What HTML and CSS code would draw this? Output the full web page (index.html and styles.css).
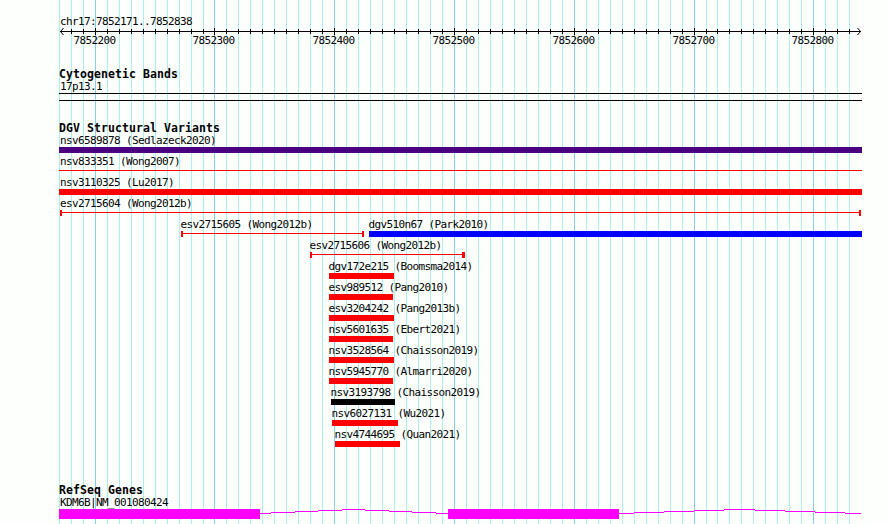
FILE: index.html
```
<!DOCTYPE html>
<html lang="en">
<head>
    <meta charset="UTF-8">
    <title>chr17:7852171..7852838</title>
    <link rel="stylesheet" href="styles.css">
</head>
<body>

<main class="browser">

    <header class="ruler">
        <p class="label">chr17:7852171..7852838</p>
        <svg class="axis" width="803" height="19" viewBox="59 28 803 19">
            <path d="M60 31.5H861"/>
            <!-- minor ticks -->
            <path class="minor" d="M71 31.5H204M226 31.5H707M717 31.5H850"/>
            <!-- major ticks -->
            <path d="M95.5 28v7M214.5 28v7M334.5 28v7M454.5 28v7M574.5 28v7M694.5 28v7M813.5 28v7"/>
            <!-- arrow heads -->
            <path d="M63.5 28L60.5 31.5L63.5 35M857.5 28L860.5 31.5L857.5 35"/>
            <text x="73.5" y="44">7852200</text>
            <text x="192.5" y="44">7852300</text>
            <text x="312.5" y="44">7852400</text>
            <text x="432.5" y="44">7852500</text>
            <text x="552.5" y="44">7852600</text>
            <text x="672.5" y="44">7852700</text>
            <text x="791.5" y="44">7852800</text>
        </svg>
    </header>

    <section class="track bands">
        <h2>Cytogenetic Bands</h2>
        <p class="label">17p13.1</p>
        <div class="band"></div>
    </section>

    <section class="track variants">
        <h2>DGV Structural Variants</h2>
        <div class="row">
            <div class="feature" style="--w: 803px"><p class="label">nsv6589878 (Sedlazeck2020)</p><div class="bar indigo"></div></div>
        </div>
        <div class="row">
            <div class="feature" style="--w: 803px"><p class="label">nsv833351 (Wong2007)</p><div class="bar thin"></div></div>
        </div>
        <div class="row">
            <div class="feature" style="--w: 803px"><p class="label">nsv3110325 (Lu2017)</p><div class="bar"></div></div>
        </div>
        <div class="row">
            <div class="feature" style="--w: 803px"><p class="label">esv2715604 (Wong2012b)</p><div class="bar span full"></div></div>
        </div>
        <div class="row">
            <div class="feature inner" style="--gap: 122px; --w: 183px"><p class="label">esv2715605 (Wong2012b)</p><div class="bar span"></div></div>
            <div class="feature inner" style="--gap: 5px; --w: 493px"><p class="label">dgv510n67 (Park2010)</p><div class="bar blue"></div></div>
        </div>
        <div class="row">
            <div class="feature inner" style="--gap: 251px; --w: 155px"><p class="label">esv2715606 (Wong2012b)</p><div class="bar span wide"></div></div>
        </div>
        <div class="row">
            <div class="feature inner" style="--gap: 270px; --w: 65px"><p class="label">dgv172e215 (Boomsma2014)</p><div class="bar"></div></div>
        </div>
        <div class="row">
            <div class="feature inner" style="--gap: 270px; --w: 64px"><p class="label">esv989512 (Pang2010)</p><div class="bar"></div></div>
        </div>
        <div class="row">
            <div class="feature inner" style="--gap: 270px; --w: 65px"><p class="label">esv3204242 (Pang2013b)</p><div class="bar"></div></div>
        </div>
        <div class="row">
            <div class="feature inner" style="--gap: 270px; --w: 64px"><p class="label">nsv5601635 (Ebert2021)</p><div class="bar"></div></div>
        </div>
        <div class="row">
            <div class="feature inner" style="--gap: 270px; --w: 65px"><p class="label">nsv3528564 (Chaisson2019)</p><div class="bar"></div></div>
        </div>
        <div class="row">
            <div class="feature inner" style="--gap: 270px; --w: 64px"><p class="label">nsv5945770 (Almarri2020)</p><div class="bar"></div></div>
        </div>
        <div class="row">
            <div class="feature inner" style="--gap: 272px; --w: 64px"><p class="label">nsv3193798 (Chaisson2019)</p><div class="bar black"></div></div>
        </div>
        <div class="row">
            <div class="feature inner" style="--gap: 273px; --w: 66px"><p class="label">nsv6027131 (Wu2021)</p><div class="bar"></div></div>
        </div>
        <div class="row">
            <div class="feature inner" style="--gap: 276px; --w: 65px"><p class="label">nsv4744695 (Quan2021)</p><div class="bar"></div></div>
        </div>
    </section>

    <section class="track genes">
        <h2>RefSeq Genes</h2>
        <p class="label">KDM6B|NM_001080424</p>
        <svg class="gene" width="803" height="10" viewBox="59 509 803 10">
            <!-- exons -->
            <path class="exon" d="M59 509h201v10h-201zM448 509h171v10h-171z"/>
            <!-- introns -->
            <path d="M260 513.5H271M271 512.5H295M295 511.5H318M318 510.5H342M342 509.5H365M365 510.5H389M389 511.5H412M412 512.5H436M436 513.5H448"/>
            <path d="M619 513.5H634M634 512.5H664M664 511.5H694M694 510.5H724M724 509.5H755M755 510.5H785M785 511.5H815M815 512.5H845M845 513.5H861"/>
        </svg>
    </section>

</main>

</body>
</html>
```
FILE: styles.css
```
*, *::before, *::after {
    margin: 0;
    padding: 0;
    box-sizing: border-box;
}

body {
    background-color: #fdfffc;
    color: #000;
    font: 11px/13px "DejaVu Sans Mono", monospace;
    letter-spacing: -0.62px;
    overflow: hidden;
}

/* grid: pale line every 10 bp, darker one every 100 bp */
.browser {
    --minor: repeating-linear-gradient(90deg, #afeeee 0 1px, transparent 1px 12px);
    --major: linear-gradient(#87ceeb, #87ceeb);
    width: 890px;
    height: 524px;
    padding: 15px 28px 0 59px;
    background-image:
        var(--major), var(--major), var(--major), var(--major),
        var(--major), var(--major), var(--major),
        var(--minor), var(--minor), var(--minor);
    background-repeat: no-repeat;
    background-position:
        95px 0, 214px 0, 334px 0, 454px 0, 574px 0, 694px 0, 813px 0,
        59px 0, 214px 0, 717px 0;
    background-size:
        1px 100%, 1px 100%, 1px 100%, 1px 100%, 1px 100%, 1px 100%, 1px 100%,
        145px 100%, 493px 100%, 133px 100%;
}

svg {
    display: block;
    overflow: visible;
}

.label {
    height: 13px;
    padding-left: 1px;
    white-space: nowrap;
}

h2 {
    height: 12px;
    font: bold 11.5px/12px "DejaVu Sans Mono", monospace;
    letter-spacing: 0.08px;
    white-space: nowrap;
}

.axis path {
    fill: none;
    stroke: #000;
}

.axis .minor {
    stroke-width: 5;
    stroke-dasharray: 1 11;
}

.bands {
    margin-top: 21px;
}

.band {
    height: 8px;
    border: solid #000;
    border-width: 1px 0;
}

.variants {
    margin-top: 21px;
}

.row {
    display: flex;
    height: 21px;
}

.feature {
    flex: none;
    width: var(--w);
    margin-left: var(--gap, 0);
}

.inner .label {
    padding-left: 0;
    margin-left: -0.5px;
}

.bar {
    height: 6px;
    background-color: #f00;

    &.indigo { background-color: #4b0082; }
    &.blue { background-color: #00f; }
    &.black { background-color: #000; }

    /* 1px line, two pixels below the top of a full bar */
    &.thin {
        height: 3px;
        border-top: 2px solid transparent;
        background-clip: padding-box;
    }

    &.span {
        border: solid #f00;
        border-width: 0 2px;
        background: linear-gradient(#f00, #f00) 0 2px / 100% 1px no-repeat;
    }
    &.full { margin: 0 1px; }
    &.wide { border-right-width: 3px; }
}

.genes {
    margin-top: 35px;
}

.gene path {
    fill: none;
    stroke: #f0f;
}

.gene .exon {
    fill: #f0f;
    stroke: none;
}
```
